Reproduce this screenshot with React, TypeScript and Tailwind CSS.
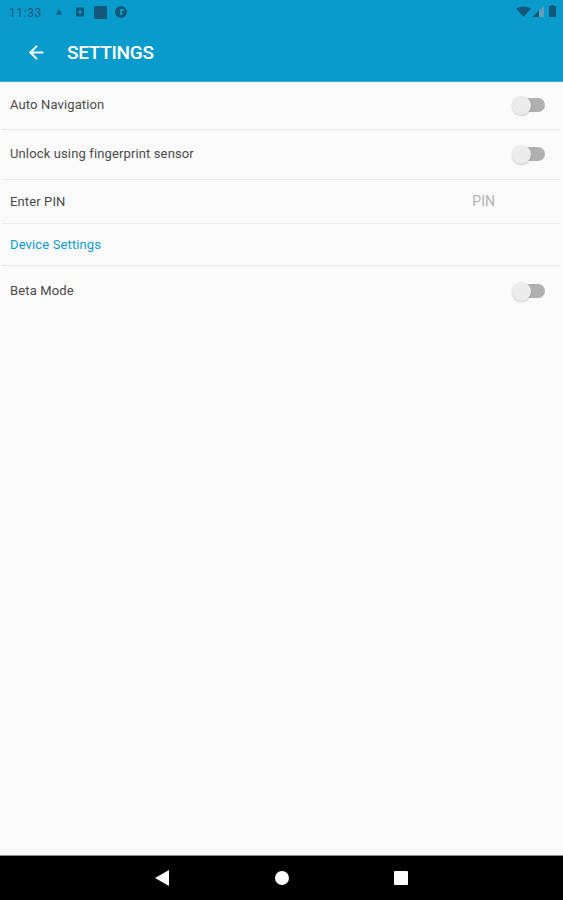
import { ArrowLeft } from 'lucide-react';

function Toggle() {
  return (
    <div className="relative w-[33px] h-[19px] mr-[15px]">
      <div className="absolute left-[8px] top-[2px] w-[25px] h-[14px] rounded-full bg-[#b0b0b0]" />
      <div className="absolute left-0 top-0 w-[19px] h-[19px] rounded-full bg-[#ececec] shadow-[0_1px_2px_rgba(0,0,0,0.2)]" />
    </div>
  );
}

function Row({ label, height, children, blue, nudge }: { label: string; height: string; children?: React.ReactNode; blue?: boolean; nudge?: boolean }) {
  return (
    <div className={`flex items-center justify-between ml-[2px] mr-[3px] pl-[8px] border-b border-[#eaeaea] ${height}`}>
      <span className={`text-[13px] tracking-[0.13px] ${nudge ? 'mb-[1px]' : ''} ${blue ? 'text-[#0f9bd0]' : 'text-[#4a4a4a]'}`}>{label}</span>
      {children}
    </div>
  );
}

export default function App() {
  return (
    <div className="w-[563px] h-[900px] flex flex-col bg-[#fafafa] font-['Roboto',sans-serif] overflow-hidden">
      {/* Status bar + toolbar */}
      <div className="h-[82px] bg-[#0a9bcd] border-b border-[#3fa9d3] flex flex-col">
        <div className="h-[24px] flex items-center justify-between pl-[9px] pr-[7px] text-[#13587a]">
          <div className="flex items-center">
            <span className="text-[12px] tracking-[0.6px] w-[36px] mt-[1px]">11:33</span>
            <svg width="8" height="8" viewBox="0 0 8 8" className="ml-[10px] fill-[#13587a]"><path d="M4 1.5 7 6.5H1z" /></svg>
            <svg width="10" height="10" viewBox="0 0 10 10" className="ml-[12px] fill-[#13587a]"><path d="M1 0.5h8v9H1zM3.500 3.500v3h3v-3z" fillRule="evenodd" /></svg>
            <div className="ml-[9px] w-[13px] h-[13px] rounded-[1px] bg-[#13587a]" />
            <svg width="14" height="14" viewBox="0 0 14 14" className="ml-[7px] fill-[#13587a]"><path d="M7 1a6 6 0 1 0 0 12A6 6 0 0 0 7 1zM6 4h4v2H8v4H6z" fillRule="evenodd" /></svg>
          </div>
          <div className="flex items-center mb-[2px]">
            <svg width="15" height="11" viewBox="0 0 15 11" className="fill-[#13587a]"><path d="M0 2.500Q7.500 -1.500 15 2.500L7.500 11z" /></svg>
            <svg width="12" height="11" viewBox="0 0 12 11" className="ml-[1px]"><path d="M0 11 12 0v11z" fill="#5f9db8" /><path d="M0 11 7 4.500V11z" fill="#13587a" /></svg>
            <svg width="7" height="12" viewBox="0 0 7 12" className="ml-[5px] fill-[#13587a]"><path d="M2 0h3v1h2v11H0V1h2z" /></svg>
          </div>
        </div>
        <div className="flex-1 flex items-center pl-[26px] text-white">
          <ArrowLeft size={21} strokeWidth={2.2} />
          <span className="ml-[20px] text-[19px] font-medium leading-none tracking-[-0.3px]">SETTINGS</span>
        </div>
      </div>

      {/* Settings list */}
      <div className="flex-1">
        <Row label="Auto Navigation" height="h-[48px]" nudge><Toggle /></Row>
        <Row label="Unlock using fingerprint sensor" height="h-[50px]" nudge><Toggle /></Row>
        <Row label="Enter PIN" height="h-[44px]">
          <span className="text-[14px] text-[#b4b4b4] mr-[65px]">PIN</span>
        </Row>
        <Row label="Device Settings" height="h-[42px]" blue />
        <div className="flex items-center justify-between ml-[2px] mr-[3px] pl-[8px] h-[50px]">
          <span className="text-[13px] tracking-[0.13px] text-[#4a4a4a]">Beta Mode</span>
          <Toggle />
        </div>
      </div>

      {/* Nav bar */}
      <div className="h-[45px] bg-black border-t border-[#8a8a8a] flex items-center justify-between pl-[155px] pr-[155px]">
        <svg width="14" height="16" viewBox="0 0 14 16" className="fill-white"><path d="M14 0v16L0 8z" /></svg>
        <div className="w-[14px] h-[14px] rounded-full bg-white" />
        <div className="w-[14px] h-[14px] rounded-[1px] bg-white" />
      </div>
    </div>
  );
}
